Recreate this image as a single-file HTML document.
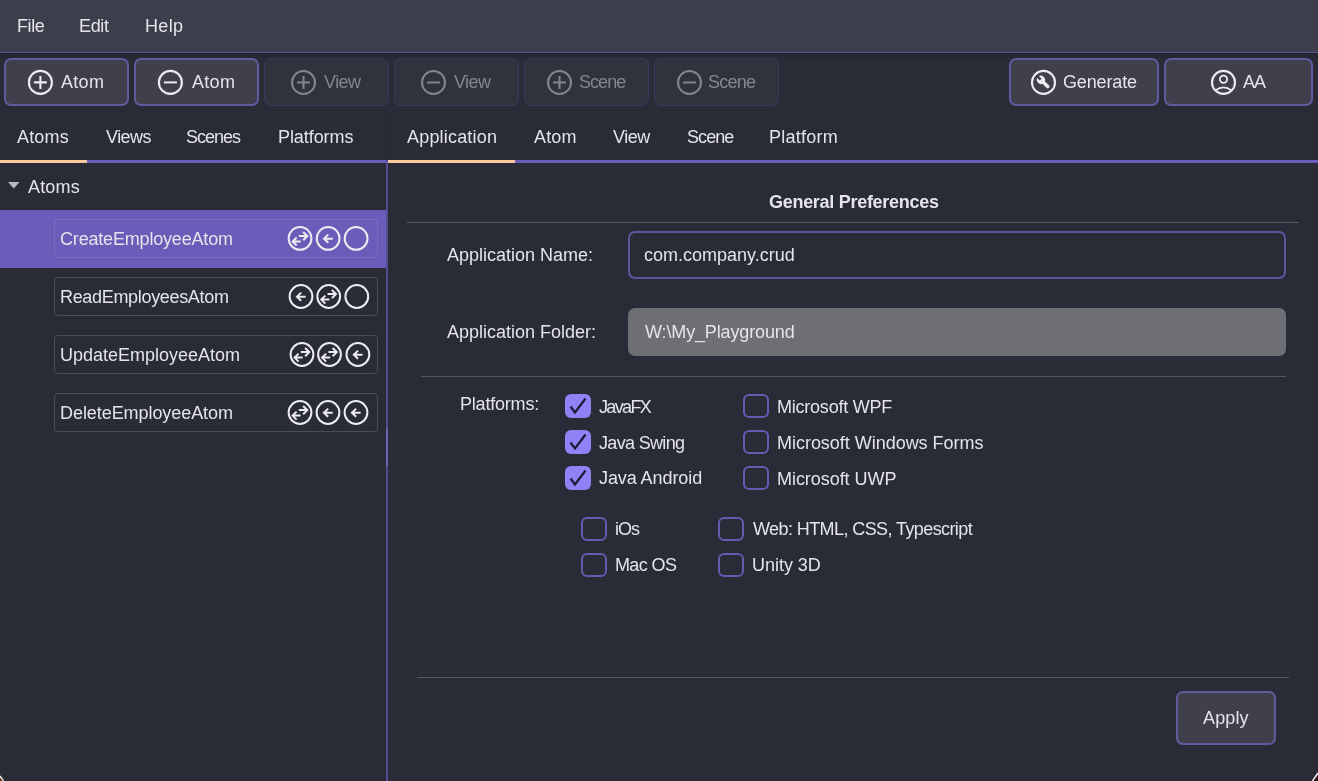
<!DOCTYPE html>
<html><head><meta charset="utf-8"><style>
html,body{margin:0;padding:0}
body{width:1318px;height:781px;overflow:hidden;position:relative;background:#292b37;font-family:"Liberation Sans",sans-serif}
.t{position:absolute;font-size:18px;line-height:18px;white-space:pre;will-change:transform}
</style></head><body>
<div style="position:absolute;left:0px;top:0px;width:1318px;height:52px;background:#3d3e4b"></div>
<div style="position:absolute;left:0px;top:52px;width:1318px;height:1px;background:#5a5190"></div>
<div style="position:absolute;left:0px;top:53px;width:1318px;height:1px;background:#24233a"></div>
<div style="position:absolute;left:0px;top:54px;width:1318px;height:4px;background:#262832"></div>
<div style="position:absolute;left:4px;top:58px;width:125px;height:48px;box-sizing:border-box;background:#3f404c;border:2px solid #625a9f;border-radius:7px"></div>
<div style="position:absolute;left:134px;top:58px;width:125px;height:48px;box-sizing:border-box;background:#3f404c;border:2px solid #625a9f;border-radius:7px"></div>
<div style="position:absolute;left:264px;top:58px;width:125px;height:48px;box-sizing:border-box;background:#30323d;border:1.5px solid #3b3860;border-radius:7px"></div>
<div style="position:absolute;left:394px;top:58px;width:125px;height:48px;box-sizing:border-box;background:#30323d;border:1.5px solid #3b3860;border-radius:7px"></div>
<div style="position:absolute;left:524px;top:58px;width:125px;height:48px;box-sizing:border-box;background:#30323d;border:1.5px solid #3b3860;border-radius:7px"></div>
<div style="position:absolute;left:654px;top:58px;width:125px;height:48px;box-sizing:border-box;background:#30323d;border:1.5px solid #3b3860;border-radius:7px"></div>
<div style="position:absolute;left:1009px;top:58px;width:150px;height:48px;box-sizing:border-box;background:#3f404c;border:2px solid #625a9f;border-radius:7px"></div>
<div style="position:absolute;left:1164px;top:58px;width:149px;height:48px;box-sizing:border-box;background:#3f404c;border:2px solid #625a9f;border-radius:7px"></div>
<div style="position:absolute;left:0px;top:160px;width:386px;height:3px;background:#6a5cb8"></div>
<div style="position:absolute;left:0px;top:160px;width:87px;height:3px;background:#f7c99b"></div>
<div style="position:absolute;left:388px;top:160px;width:930px;height:3px;background:#6a5cb8"></div>
<div style="position:absolute;left:388px;top:160px;width:127px;height:3px;background:#f7c99b"></div>
<div style="position:absolute;left:386px;top:160px;width:2px;height:621px;background:#544b93"></div>
<div style="position:absolute;left:386px;top:428px;width:2px;height:38px;background:#6e62b0"></div>
<div style="position:absolute;left:387px;top:110px;width:1px;height:50px;background:#252733"></div>
<div style="position:absolute;left:0px;top:210px;width:386px;height:58px;background:#6a5cb8"></div>
<div style="position:absolute;left:54px;top:219px;width:324px;height:39px;box-sizing:border-box;border:1px solid #7a6dc4;border-radius:4px"></div>
<div style="position:absolute;left:54px;top:277px;width:324px;height:39px;box-sizing:border-box;border:1px solid #4d4e5b;border-radius:4px"></div>
<div style="position:absolute;left:54px;top:335px;width:324px;height:39px;box-sizing:border-box;border:1px solid #4d4e5b;border-radius:4px"></div>
<div style="position:absolute;left:54px;top:393px;width:324px;height:39px;box-sizing:border-box;border:1px solid #4d4e5b;border-radius:4px"></div>
<svg style="position:absolute;left:0;top:0" width="30" height="200"><polygon points="8,182 19.5,182 13.75,188.5" fill="#b9bac4"/></svg>
<div style="position:absolute;left:407px;top:222px;width:892px;height:1px;background:#565765"></div>
<div style="position:absolute;left:421px;top:376px;width:865px;height:1px;background:#565765"></div>
<div style="position:absolute;left:417px;top:677px;width:872px;height:1px;background:#565765"></div>
<div style="position:absolute;left:628px;top:231px;width:658px;height:48px;box-sizing:border-box;border:2px solid #5d559e;border-radius:7px"></div>
<div style="position:absolute;left:628px;top:308px;width:658px;height:48px;background:#6e6f75;border-radius:7px"></div>
<div style="position:absolute;left:565px;top:394px;width:26px;height:24px;box-sizing:border-box;background:#8f81f6;border-radius:6px"></div>
<svg style="position:absolute;left:565px;top:394px" width="26" height="24"><polyline points="5.5,12.5 10,18.5 20.5,4.5" fill="none" stroke="#1d1a36" stroke-width="2.2"/></svg>
<div style="position:absolute;left:743px;top:394px;width:26px;height:24px;box-sizing:border-box;border:2px solid #645bae;border-radius:6px"></div>
<div style="position:absolute;left:565px;top:430px;width:26px;height:24px;box-sizing:border-box;background:#8f81f6;border-radius:6px"></div>
<svg style="position:absolute;left:565px;top:430px" width="26" height="24"><polyline points="5.5,12.5 10,18.5 20.5,4.5" fill="none" stroke="#1d1a36" stroke-width="2.2"/></svg>
<div style="position:absolute;left:743px;top:430px;width:26px;height:24px;box-sizing:border-box;border:2px solid #645bae;border-radius:6px"></div>
<div style="position:absolute;left:565px;top:466px;width:26px;height:24px;box-sizing:border-box;background:#8f81f6;border-radius:6px"></div>
<svg style="position:absolute;left:565px;top:466px" width="26" height="24"><polyline points="5.5,12.5 10,18.5 20.5,4.5" fill="none" stroke="#1d1a36" stroke-width="2.2"/></svg>
<div style="position:absolute;left:743px;top:466px;width:26px;height:24px;box-sizing:border-box;border:2px solid #645bae;border-radius:6px"></div>
<div style="position:absolute;left:581px;top:517px;width:26px;height:24px;box-sizing:border-box;border:2px solid #645bae;border-radius:6px"></div>
<div style="position:absolute;left:581px;top:553px;width:26px;height:24px;box-sizing:border-box;border:2px solid #645bae;border-radius:6px"></div>
<div style="position:absolute;left:718px;top:517px;width:26px;height:24px;box-sizing:border-box;border:2px solid #645bae;border-radius:6px"></div>
<div style="position:absolute;left:718px;top:553px;width:26px;height:24px;box-sizing:border-box;border:2px solid #645bae;border-radius:6px"></div>
<div style="position:absolute;left:1176px;top:691px;width:100px;height:54px;box-sizing:border-box;background:#3f404c;border:2px solid #625a9f;border-radius:7px"></div>
<svg style="position:absolute;left:24px;top:66px" width="32" height="32" viewBox="-16 -16 32 32"><g transform="translate(0.40 0.40)"><circle cx="0" cy="0" r="11.5" fill="none" stroke="#ececf0" stroke-width="2.1"/><path d="M-6.5 0H6.5M0 -6.5V6.5" stroke="#ececf0" stroke-width="2.1"/></g></svg>
<svg style="position:absolute;left:154px;top:66px" width="32" height="32" viewBox="-16 -16 32 32"><g transform="translate(0.40 0.40)"><circle cx="0" cy="0" r="11.5" fill="none" stroke="#ececf0" stroke-width="2.1"/><path d="M-6.5 0H6.5" stroke="#ececf0" stroke-width="2"/></g></svg>
<svg style="position:absolute;left:287px;top:66px" width="32" height="32" viewBox="-16 -16 32 32"><g transform="translate(0.50 0.50)"><circle cx="0" cy="0" r="11.5" fill="none" stroke="#85868d" stroke-width="2.1"/><path d="M-6.5 0H6.5M0 -6.5V6.5" stroke="#85868d" stroke-width="2.1"/></g></svg>
<svg style="position:absolute;left:417px;top:66px" width="32" height="32" viewBox="-16 -16 32 32"><g transform="translate(0.50 0.50)"><circle cx="0" cy="0" r="11.5" fill="none" stroke="#85868d" stroke-width="2.1"/><path d="M-6.5 0H6.5" stroke="#85868d" stroke-width="2"/></g></svg>
<svg style="position:absolute;left:543px;top:66px" width="32" height="32" viewBox="-16 -16 32 32"><g transform="translate(0.50 0.50)"><circle cx="0" cy="0" r="11.5" fill="none" stroke="#85868d" stroke-width="2.1"/><path d="M-6.5 0H6.5M0 -6.5V6.5" stroke="#85868d" stroke-width="2.1"/></g></svg>
<svg style="position:absolute;left:673px;top:66px" width="32" height="32" viewBox="-16 -16 32 32"><g transform="translate(0.50 0.50)"><circle cx="0" cy="0" r="11.5" fill="none" stroke="#85868d" stroke-width="2.1"/><path d="M-6.5 0H6.5" stroke="#85868d" stroke-width="2"/></g></svg>
<svg style="position:absolute;left:1027px;top:66px" width="32" height="32" viewBox="-16 -16 32 32"><g transform="translate(0.50 0.40)"><circle cx="0" cy="0" r="11.5" fill="none" stroke="#ececf0" stroke-width="2.1"/><g transform="rotate(-45)"><rect x="-1.75" y="-2" width="3.5" height="9.6" rx="1.3" fill="#ececf0"/><circle cx="0" cy="-3.6" r="4.1" fill="#ececf0"/><rect x="-1.25" y="-8.6" width="2.5" height="4.6" rx="0.4" fill="#3f404c"/></g></g></svg>
<svg style="position:absolute;left:1207px;top:66px" width="32" height="32" viewBox="-16 -16 32 32"><g transform="translate(0.50 0.40)"><circle cx="0" cy="0" r="11.5" fill="none" stroke="#ececf0" stroke-width="2.1"/><circle cx="0" cy="-3.2" r="3.6" fill="none" stroke="#ececf0" stroke-width="1.8"/><path d="M-8 8 Q0 2 8 8" fill="none" stroke="#ececf0" stroke-width="1.8"/></g></svg>
<svg style="position:absolute;left:284px;top:222px" width="32" height="32" viewBox="-16 -16 32 32"><g transform="translate(0.05 0.45)"><circle cx="0" cy="0" r="11.4" fill="none" stroke="#ececf0" stroke-width="2"/><path d="M-1.15 -2.4 H7 M3.15 -6.5 L7.3 -2.4 L3.15 1.8 M-7.2 3.1 H0.65 M-3.4 -0.9 L-7.4 3.1 L-3.4 7.1" fill="none" stroke="#ececf0" stroke-width="2" stroke-linecap="butt" stroke-linejoin="miter"/></g></svg>
<svg style="position:absolute;left:312px;top:222px" width="32" height="32" viewBox="-16 -16 32 32"><g transform="translate(0.15 0.45)"><circle cx="0" cy="0" r="11.4" fill="none" stroke="#ececf0" stroke-width="2"/><path d="M-4 0.2 H4.65 M0.15 -3.9 L-4.1 0.2 L0.15 4.3" fill="none" stroke="#ececf0" stroke-width="2" stroke-linecap="butt" stroke-linejoin="miter"/></g></svg>
<svg style="position:absolute;left:340px;top:222px" width="32" height="32" viewBox="-16 -16 32 32"><g transform="translate(0.10 0.45)"><circle cx="0" cy="0" r="11.4" fill="none" stroke="#ececf0" stroke-width="2"/></g></svg>
<svg style="position:absolute;left:285px;top:280px" width="32" height="32" viewBox="-16 -16 32 32"><g transform="translate(0.00 0.50)"><circle cx="0" cy="0" r="11.4" fill="none" stroke="#ececf0" stroke-width="2"/><path d="M-4 0.2 H4.65 M0.15 -3.9 L-4.1 0.2 L0.15 4.3" fill="none" stroke="#ececf0" stroke-width="2" stroke-linecap="butt" stroke-linejoin="miter"/></g></svg>
<svg style="position:absolute;left:312px;top:280px" width="32" height="32" viewBox="-16 -16 32 32"><g transform="translate(0.70 0.50)"><circle cx="0" cy="0" r="11.4" fill="none" stroke="#ececf0" stroke-width="2"/><path d="M-1.15 -2.4 H7 M3.15 -6.5 L7.3 -2.4 L3.15 1.8 M-7.2 3.1 H0.65 M-3.4 -0.9 L-7.4 3.1 L-3.4 7.1" fill="none" stroke="#ececf0" stroke-width="2" stroke-linecap="butt" stroke-linejoin="miter"/></g></svg>
<svg style="position:absolute;left:340px;top:280px" width="32" height="32" viewBox="-16 -16 32 32"><g transform="translate(0.80 0.50)"><circle cx="0" cy="0" r="11.4" fill="none" stroke="#ececf0" stroke-width="2"/></g></svg>
<svg style="position:absolute;left:286px;top:338px" width="32" height="32" viewBox="-16 -16 32 32"><g transform="translate(0.00 0.50)"><circle cx="0" cy="0" r="11.4" fill="none" stroke="#ececf0" stroke-width="2"/><path d="M-1.15 -2.4 H7 M3.15 -6.5 L7.3 -2.4 L3.15 1.8 M-7.2 3.1 H0.65 M-3.4 -0.9 L-7.4 3.1 L-3.4 7.1" fill="none" stroke="#ececf0" stroke-width="2" stroke-linecap="butt" stroke-linejoin="miter"/></g></svg>
<svg style="position:absolute;left:313px;top:338px" width="32" height="32" viewBox="-16 -16 32 32"><g transform="translate(0.50 0.50)"><circle cx="0" cy="0" r="11.4" fill="none" stroke="#ececf0" stroke-width="2"/><path d="M-1.15 -2.4 H7 M3.15 -6.5 L7.3 -2.4 L3.15 1.8 M-7.2 3.1 H0.65 M-3.4 -0.9 L-7.4 3.1 L-3.4 7.1" fill="none" stroke="#ececf0" stroke-width="2" stroke-linecap="butt" stroke-linejoin="miter"/></g></svg>
<svg style="position:absolute;left:341px;top:338px" width="32" height="32" viewBox="-16 -16 32 32"><g transform="translate(0.90 0.50)"><circle cx="0" cy="0" r="11.4" fill="none" stroke="#ececf0" stroke-width="2"/><path d="M-4 0.2 H4.65 M0.15 -3.9 L-4.1 0.2 L0.15 4.3" fill="none" stroke="#ececf0" stroke-width="2" stroke-linecap="butt" stroke-linejoin="miter"/></g></svg>
<svg style="position:absolute;left:284px;top:396px" width="32" height="32" viewBox="-16 -16 32 32"><g transform="translate(0.00 0.50)"><circle cx="0" cy="0" r="11.4" fill="none" stroke="#ececf0" stroke-width="2"/><path d="M-1.15 -2.4 H7 M3.15 -6.5 L7.3 -2.4 L3.15 1.8 M-7.2 3.1 H0.65 M-3.4 -0.9 L-7.4 3.1 L-3.4 7.1" fill="none" stroke="#ececf0" stroke-width="2" stroke-linecap="butt" stroke-linejoin="miter"/></g></svg>
<svg style="position:absolute;left:312px;top:396px" width="32" height="32" viewBox="-16 -16 32 32"><g transform="translate(0.00 0.50)"><circle cx="0" cy="0" r="11.4" fill="none" stroke="#ececf0" stroke-width="2"/><path d="M-4 0.2 H4.65 M0.15 -3.9 L-4.1 0.2 L0.15 4.3" fill="none" stroke="#ececf0" stroke-width="2" stroke-linecap="butt" stroke-linejoin="miter"/></g></svg>
<svg style="position:absolute;left:340px;top:396px" width="32" height="32" viewBox="-16 -16 32 32"><g transform="translate(0.00 0.50)"><circle cx="0" cy="0" r="11.4" fill="none" stroke="#ececf0" stroke-width="2"/><path d="M-4 0.2 H4.65 M0.15 -3.9 L-4.1 0.2 L0.15 4.3" fill="none" stroke="#ececf0" stroke-width="2" stroke-linecap="butt" stroke-linejoin="miter"/></g></svg>
<svg style="position:absolute;left:1306px;top:769px" width="12" height="12"><path d="M12 3 L12 12 L5 12 Z" fill="#2a1010"/><path d="M12 4 L6.5 12" stroke="#e8e8e8" stroke-width="1.6"/></svg>
<svg style="position:absolute;left:0px;top:775px" width="6" height="6"><path d="M0 0.5 L0 6 L4 6 Z" fill="#6a3010"/><path d="M0 1 L3.5 6" stroke="#e8e8e8" stroke-width="1.4"/></svg>
<div class="t" style="left:17.2px;top:17.0px;letter-spacing:-0.4px;color:#e4e4ea">File</div>
<div class="t" style="left:79.0px;top:17.0px;letter-spacing:-0.333px;color:#e4e4ea">Edit</div>
<div class="t" style="left:145.0px;top:17.0px;letter-spacing:0.333px;color:#e4e4ea">Help</div>
<div class="t" style="left:61.3px;top:73.2px;letter-spacing:0.3px;color:#e4e4ea">Atom</div>
<div class="t" style="left:191.6px;top:73.2px;letter-spacing:0.3px;color:#e4e4ea">Atom</div>
<div class="t" style="left:324.3px;top:73.2px;letter-spacing:-0.533px;color:#85868d">View</div>
<div class="t" style="left:454.3px;top:73.2px;letter-spacing:-0.6px;color:#85868d">View</div>
<div class="t" style="left:578.5px;top:73.2px;letter-spacing:-0.95px;color:#85868d">Scene</div>
<div class="t" style="left:708.0px;top:73.2px;letter-spacing:-0.75px;color:#85868d">Scene</div>
<div class="t" style="left:1063.0px;top:73.2px;letter-spacing:-0.143px;color:#e4e4ea">Generate</div>
<div class="t" style="left:1243.0px;top:73.2px;letter-spacing:-1.0px;color:#e4e4ea">AA</div>
<div class="t" style="left:17.3px;top:128.3px;letter-spacing:0.175px;color:#e4e4ea">Atoms</div>
<div class="t" style="left:105.5px;top:128.3px;letter-spacing:-0.55px;color:#e4e4ea">Views</div>
<div class="t" style="left:186.4px;top:128.3px;letter-spacing:-1.0px;color:#e4e4ea">Scenes</div>
<div class="t" style="left:278.0px;top:128.3px;letter-spacing:-0.075px;color:#e4e4ea">Platforms</div>
<div class="t" style="left:406.5px;top:128.3px;letter-spacing:0.19px;color:#e4e4ea">Application</div>
<div class="t" style="left:533.6px;top:128.3px;letter-spacing:0.133px;color:#e4e4ea">Atom</div>
<div class="t" style="left:613.3px;top:128.3px;letter-spacing:-0.467px;color:#e4e4ea">View</div>
<div class="t" style="left:686.5px;top:128.3px;letter-spacing:-0.925px;color:#e4e4ea">Scene</div>
<div class="t" style="left:769.4px;top:128.3px;letter-spacing:0.229px;color:#e4e4ea">Platform</div>
<div class="t" style="left:27.6px;top:177.5px;letter-spacing:0.175px;color:#e4e4ea">Atoms</div>
<div class="t" style="left:59.5px;top:230.3px;letter-spacing:-0.182px;color:#e4e4ea">CreateEmployeeAtom</div>
<div class="t" style="left:59.5px;top:288.3px;letter-spacing:-0.325px;color:#e4e4ea">ReadEmployeesAtom</div>
<div class="t" style="left:59.5px;top:346.0px;letter-spacing:-0.006px;color:#e4e4ea">UpdateEmployeeAtom</div>
<div class="t" style="left:59.5px;top:403.7px;letter-spacing:-0.065px;color:#e4e4ea">DeleteEmployeeAtom</div>
<div class="t" style="left:768.9px;top:193.0px;letter-spacing:-0.289px;color:#e4e4ea;font-weight:bold">General Preferences</div>
<div class="t" style="left:446.6px;top:246.0px;letter-spacing:0.0px;color:#e4e4ea">Application Name:</div>
<div class="t" style="left:643.6px;top:246.4px;letter-spacing:0.0px;color:#e4e4ea">com.company.crud</div>
<div class="t" style="left:446.7px;top:323.0px;letter-spacing:-0.011px;color:#e4e4ea">Application Folder:</div>
<div class="t" style="left:644.6px;top:323.0px;letter-spacing:-0.133px;color:#e4e4ea">W:\My_Playground</div>
<div class="t" style="left:460.3px;top:395.0px;letter-spacing:-0.2px;color:#e4e4ea">Platforms:</div>
<div class="t" style="left:598.7px;top:398.0px;letter-spacing:-1.64px;color:#e4e4ea">JavaFX</div>
<div class="t" style="left:598.7px;top:433.5px;letter-spacing:-0.667px;color:#e4e4ea">Java Swing</div>
<div class="t" style="left:598.7px;top:469.4px;letter-spacing:-0.082px;color:#e4e4ea">Java Android</div>
<div class="t" style="left:776.9px;top:398.0px;letter-spacing:-0.225px;color:#e4e4ea">Microsoft WPF</div>
<div class="t" style="left:776.9px;top:433.5px;letter-spacing:-0.027px;color:#e4e4ea">Microsoft Windows Forms</div>
<div class="t" style="left:776.9px;top:470.0px;letter-spacing:-0.05px;color:#e4e4ea">Microsoft UWP</div>
<div class="t" style="left:615.0px;top:520.0px;letter-spacing:-0.95px;color:#e4e4ea">iOs</div>
<div class="t" style="left:615.0px;top:555.6px;letter-spacing:-0.62px;color:#e4e4ea">Mac OS</div>
<div class="t" style="left:752.7px;top:520.0px;letter-spacing:-0.588px;color:#e4e4ea">Web: HTML, CSS, Typescript</div>
<div class="t" style="left:751.7px;top:555.6px;letter-spacing:-0.029px;color:#e4e4ea">Unity 3D</div>
<div class="t" style="left:1203.0px;top:709.4px;letter-spacing:0.125px;color:#e4e4ea">Apply</div>
</body></html>
